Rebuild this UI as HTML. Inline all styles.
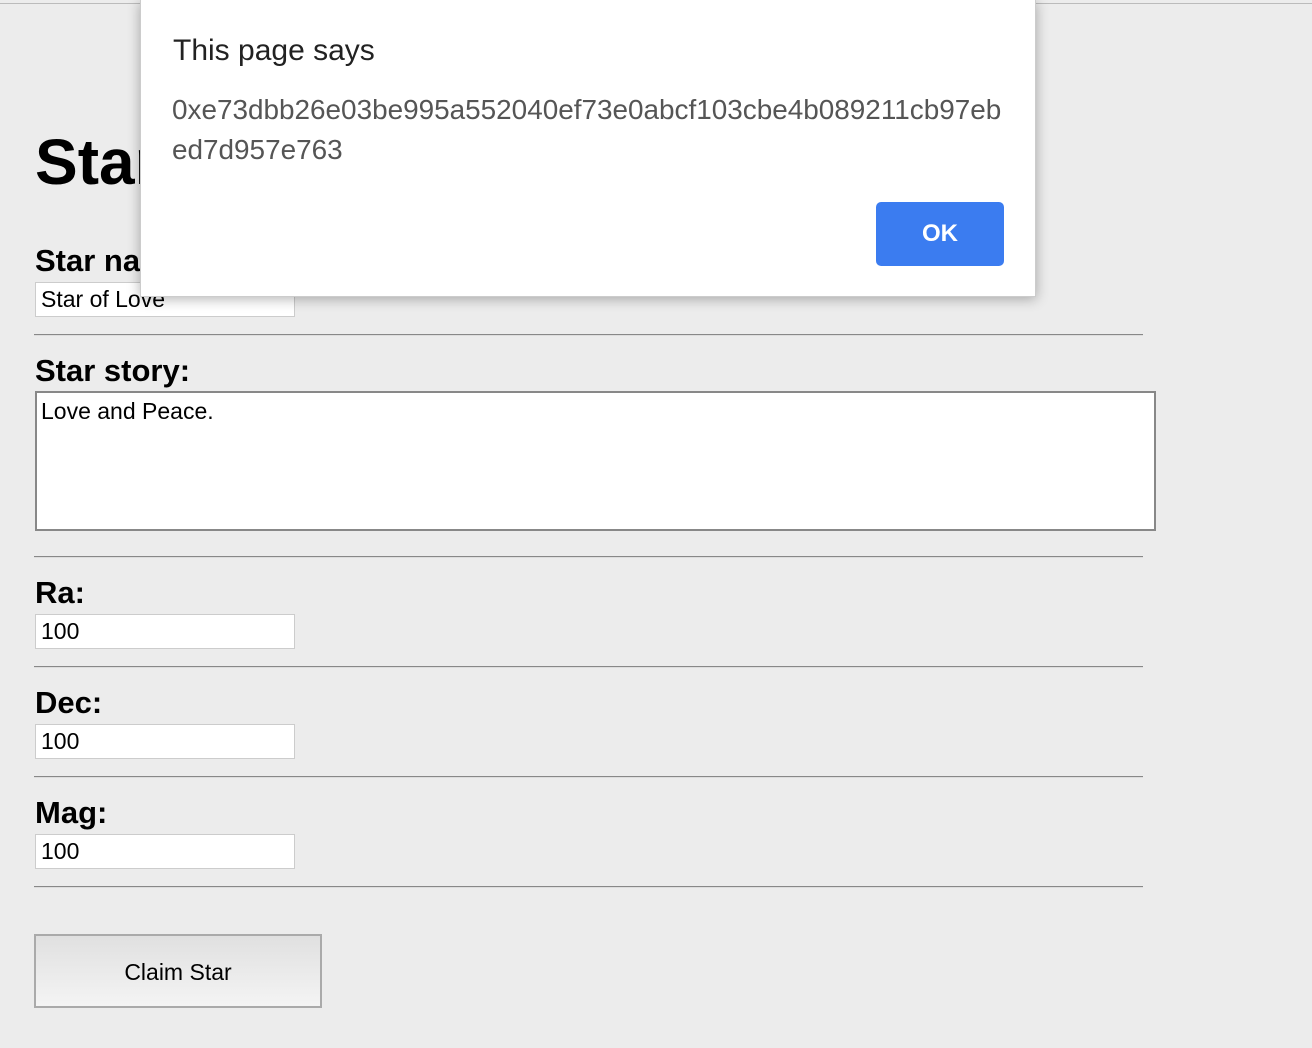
<!DOCTYPE html>
<html><head><style>
body{margin:0;width:1312px;height:1048px;background:#ececec;position:relative;overflow:hidden;font-family:"Liberation Sans",Arial,sans-serif}
.a{position:absolute}
.topline{left:0;top:3px;width:1312px;height:1px;background:#bbb}
h1{position:absolute;left:35px;top:124px;margin:0;font-size:64px;font-weight:bold;line-height:76px}
.lbl{position:absolute;left:35px;font-size:31px;font-weight:bold;line-height:36px}
.inp{position:absolute;left:35px;background:#fff;border:1px solid #ccc;font-size:23px;line-height:33px;padding-left:5px;box-sizing:border-box;width:260px;height:35px}
.hr{position:absolute;left:34px;width:1109px;height:1px;background:#888;border-bottom:1px solid #ddd}
.ta{left:35px;top:391px;width:1121px;height:140px;background:#fff;border:2px solid #888;box-sizing:border-box;font-size:23px;padding:5px 4px}
.btn{left:34px;top:934px;width:288px;height:74px;border:2px solid #aaa;box-sizing:border-box;background:linear-gradient(#e0e0e0,#f4f4f4);font-size:23px;text-align:center;line-height:72px}
.dlg{left:140px;top:0;width:896px;height:297px;background:#fff;box-shadow:0 2px 12px rgba(0,0,0,.3);border:1px solid #ccc;border-top:none;box-sizing:border-box}
.ok{left:876px;top:202px;width:128px;height:64px;background:#3b7cf0;border-radius:5px;color:#fff;font-weight:bold;font-size:24px;text-align:center;line-height:64px}
</style></head><body>
<div class="a topline"></div>
<h1>Star</h1>
<div class="lbl" style="top:243px">Star name:</div>
<div class="inp" style="top:282px">Star of Love</div>
<div class="hr" style="top:334px"></div>
<div class="lbl" style="top:353px">Star story:</div>
<div class="a ta">Love and Peace.</div>
<div class="hr" style="top:556px"></div>
<div class="lbl" style="top:575px">Ra:</div>
<div class="inp" style="top:614px">100</div>
<div class="hr" style="top:666px"></div>
<div class="lbl" style="top:685px">Dec:</div>
<div class="inp" style="top:724px">100</div>
<div class="hr" style="top:776px"></div>
<div class="lbl" style="top:795px">Mag:</div>
<div class="inp" style="top:834px">100</div>
<div class="hr" style="top:886px"></div>
<div class="a btn">Claim Star</div>
<div class="a dlg">
<div class="a" style="left:32px;top:34px;font-size:30px;color:#222;white-space:nowrap">This page says</div>
<div class="a" style="left:31px;top:90px;width:880px;font-size:27.9px;line-height:40px;color:#555;white-space:nowrap">0xe73dbb26e03be995a552040ef73e0abcf103cbe4b089211cb97eb<br>ed7d957e763</div>
</div>
<div class="a ok">OK</div>
</body></html>
